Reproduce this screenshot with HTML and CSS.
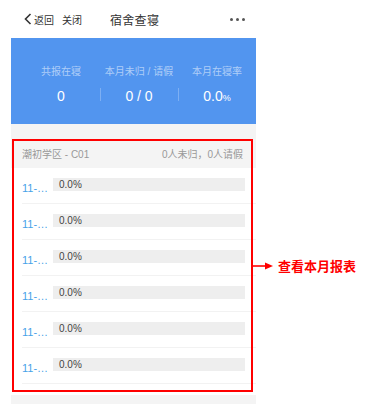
FILE: index.html
```html
<!DOCTYPE html>
<html lang="zh-CN">
<head>
    <meta charset="UTF-8">
    <meta name="viewport" content="width=device-width, initial-scale=1.0">
    <title>宿舍查寝</title>
    <link rel="stylesheet" href="styles.css">
</head>
<body>
    <div class="phone">
        <div class="navbar">
            <div class="nav-left">
                <svg class="back-icon" width="8" height="12" viewBox="0 0 8 12">
                    <path d="M6.5 1 L1.5 6 L6.5 11" fill="none" stroke="#333" stroke-width="1.6"/>
                </svg>
                <span>返回</span>
                <span class="nav-close">关闭</span>
            </div>
            <div class="nav-title">宿舍查寝</div>
            <div class="nav-more">
                <i></i><i></i><i></i>
            </div>
        </div>

        <div class="summary">
            <div class="stat">
                <div class="stat-label">共报在寝</div>
                <div class="stat-value">0</div>
            </div>
            <div class="stat">
                <div class="stat-label">本月未归 / 请假</div>
                <div class="stat-value">0 / 0</div>
            </div>
            <div class="stat">
                <div class="stat-label">本月在寝率</div>
                <div class="stat-value">0.0<small>%</small></div>
            </div>
        </div>

        <div class="card">
            <div class="card-head">
                <span>潮初学区 - C01</span>
                <span>0人未归，0人请假</span>
            </div>
            <div class="rows">
                <div class="row"><span class="room">11-…</span><div class="bar">0.0%</div></div>
                <div class="row"><span class="room">11-…</span><div class="bar">0.0%</div></div>
                <div class="row"><span class="room">11-…</span><div class="bar">0.0%</div></div>
                <div class="row"><span class="room">11-…</span><div class="bar">0.0%</div></div>
                <div class="row"><span class="room">11-…</span><div class="bar">0.0%</div></div>
                <div class="row"><span class="room">11-…</span><div class="bar">0.0%</div></div>
            </div>
        </div>
        <div class="bottom-gap"></div>
    </div>

    <!-- annotation -->
    <div class="mark-box"></div>
    <div class="mark-note">
        <svg width="22" height="8" viewBox="0 0 22 8">
            <path d="M0 4 H15" stroke="#f00" stroke-width="1.6"/>
            <path d="M13 0.5 L21 4 L13 7.5 Z" fill="#f00"/>
        </svg>
        <span>查看本月报表</span>
    </div>
</body>
</html>
```

FILE: styles.css
```css
body {
    margin: 0;
    background-color: #fff;
    font-family: "Liberation Sans", "Noto Sans CJK SC", sans-serif;
    color: #333;
    position: relative;
    height: 404px;
    overflow: hidden;
}
.phone {
    width: 245px;
    margin-left: 11px;
    background-color: #f4f4f4;
}
.navbar {
    height: 38px;
    background-color: #fff;
    display: flex;
    align-items: center;
    position: relative;
}
.nav-left {
    display: flex;
    align-items: center;
    font-size: 10px;
    color: #333;
    padding-left: 13px;
}
.back-icon {
    margin-right: 2px;
}
.nav-close {
    margin-left: 8px;
}
.nav-title {
    position: absolute;
    left: 99px;
    font-size: 12px;
    color: #333;
    letter-spacing: 0.3px;
}
.nav-more {
    margin-left: auto;
    margin-right: 11px;
    display: flex;
    gap: 3px;
}
.nav-more i {
    width: 3px;
    height: 3px;
    border-radius: 50%;
    background-color: #555;
}
.summary {
    height: 86px;
    background-color: #5295ef;
    display: flex;
    padding-left: 11px;
    box-sizing: border-box;
    padding-top: 27px;
}
.stat {
    flex: 1;
    text-align: center;
    position: relative;
}
.stat + .stat::before {
    content: "";
    position: absolute;
    left: 0;
    top: 23px;
    height: 13px;
    width: 1px;
    background-color: rgba(255, 255, 255, 0.25);
}
.stat-label {
    font-size: 10px;
    color: rgba(255, 255, 255, 0.55);
    line-height: 14px;
}
.stat-value {
    font-size: 14px;
    color: #fff;
    margin-top: 9px;
    line-height: 16px;
}
.stat-value small {
    font-size: 9px;
}
.card {
    margin-top: 15px;
}
.card-head {
    height: 29px;
    display: flex;
    justify-content: space-between;
    align-items: center;
    padding: 0 13px 0 11px;
    font-size: 10px;
    color: #999;
}
.rows {
    background-color: #fff;
    padding-left: 11px;
    padding-bottom: 11px;
}
.row {
    height: 35px;
    display: flex;
    align-items: center;
    border-bottom: 1px solid #f2f2f2;
}
.room {
    width: 31px;
    font-size: 11px;
    color: #48a2e8;
    padding-top: 4px;
}
.bar {
    width: 192px;
    height: 13px;
    line-height: 13px;
    background-color: #eee;
    font-size: 10px;
    color: #444;
    padding-left: 6px;
    box-sizing: border-box;
    margin-bottom: 3px;
}
.bottom-gap {
    height: 14px;
}
.mark-box {
    position: absolute;
    left: 12px;
    top: 139px;
    width: 237px;
    height: 249px;
    border: 2px solid #f00;
}
.mark-note {
    position: absolute;
    left: 252px;
    top: 256px;
    display: flex;
    align-items: center;
    color: #f00;
    font-weight: bold;
    font-size: 13px;
    font-family: "Noto Sans CJK SC", sans-serif;
}
.mark-note span {
    margin-left: 4px;
}
```
